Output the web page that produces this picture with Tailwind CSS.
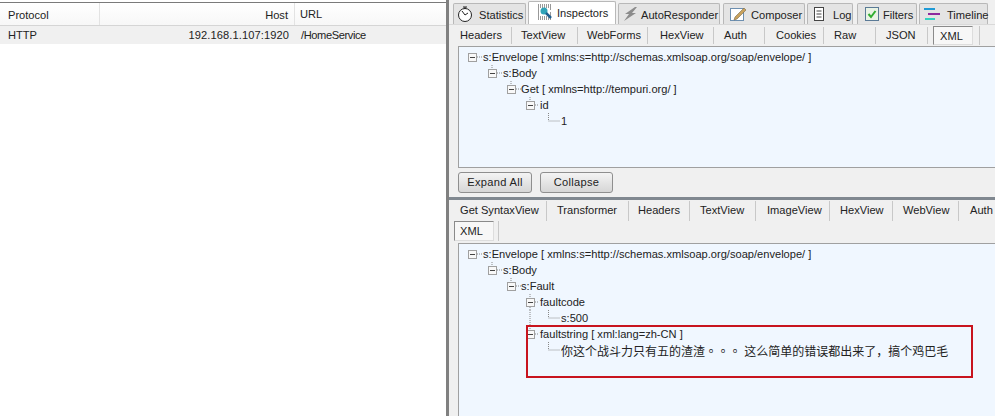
<!DOCTYPE html>
<html lang="zh-CN">
<head>
  <meta charset="UTF-8" />
  <title>Fiddler</title>
  <script src="https://cdn.jsdelivr.net/npm/@tailwindcss/browser@4"></script>
</head>
<body class="bg-[#f0f0f0] text-[#222] h-[416px] w-[995px] overflow-hidden font-['Liberation_Sans','Noto_Sans_CJK_SC',sans-serif] text-[11.1px]">
  <svg width="0" height="0" class="block h-0">
    <symbol id="exp" viewBox="0 0 9 9"><rect x="0.5" y="0.5" width="8" height="8" fill="#f8f8f8" stroke="#a0a0a0"/><path d="M2 4.5h5" stroke="#444"/></symbol>
  </svg>
  <div class="flex h-full">
    <!-- session list -->
    <div class="w-[446px] shrink-0 pt-[2px] bg-white flex flex-col">
      <div class="h-[1px] bg-[#7a7a7a]"></div>
      <div class="flex h-[23px] items-center border-b border-[#d5d5d5] bg-gradient-to-b from-white to-[#f7f7f7]">
        <div class="w-[100px] pl-[8px] border-r border-[#e3e3e3] h-full leading-[24px]">Protocol</div>
        <div class="w-[195px] pr-[6px] text-right border-r border-[#e3e3e3] h-full leading-[24px]">Host</div>
        <div class="pl-[5px] leading-[24px]">URL</div>
      </div>
      <div class="flex h-[18px] bg-[#f0f0f0] leading-[19px]">
        <div class="w-[100px] pl-[8px]">HTTP</div>
        <div class="w-[189px] text-right tracking-[0.1px]">192.168.1.107:1920</div>
        <div class="pl-[12px] tracking-[-0.4px]">/HomeService</div>
      </div>
    </div>
    <div class="w-[3px] shrink-0 bg-[#808080]"></div>

    <!-- inspectors -->
    <div class="flex-1 min-w-0 flex flex-col">
      <!-- top tabs -->
      <div class="flex items-end h-[24px] pl-[4px] pt-[2px] leading-[20px] [&>div>span]:translate-y-[1px]">
        <div class="w-[73px] h-[21px] mr-[2px] flex items-center gap-[6px] pl-[3px] bg-[#e4e4e4] border border-b-0 border-[#b8b8b8] rounded-t-[2px]">
          <svg width="16" height="18" viewBox="0 0 16 18" fill="none" stroke="#222" class="shrink-0"><circle cx="8" cy="10" r="6.5" fill="#fff"/><path d="M8 10L5 6M8 10l3-2M6 2h4M8 2v2"/></svg>
          <span>Statistics</span>
        </div>
        <div class="w-[88px] h-[23px] mr-[2px] flex items-center gap-[4px] pl-[8px] pb-[2px] bg-white border border-b-0 border-[#b8b8b8] rounded-t-[2px]">
          <svg width="16" height="16" viewBox="0 0 16 16" class="shrink-0"><path d="M1 1h14v14H1z" fill="#fff"/><path d="M1 1h14M1 3h14M1 13h14M1 15h14M1 5h2M1 7h2M1 9h2M1 11h2M13 5h2M13 9h2M13 11h2" stroke="#333" stroke-dasharray="1 1"/><circle cx="7" cy="7" r="3.5" fill="#2fa3b8"/><path d="M9 9l5 5" stroke="#1f5f8f" stroke-width="2.5"/></svg>
          <span>Inspectors</span>
        </div>
        <div class="w-[102px] h-[21px] mr-[3px] flex items-center gap-[2px] pl-[4px] bg-[#e4e4e4] border border-b-0 border-[#b8b8b8] rounded-t-[2px]">
          <svg width="16" height="16" viewBox="0 0 16 16" class="shrink-0"><path d="M12 1L2 8h4l-5 7 12-8H9l5-6z" fill="#8c8c8c"/></svg>
          <span>AutoResponder</span>
        </div>
        <div class="w-[82px] h-[21px] mr-[2px] flex items-center gap-[4px] pl-[5px] bg-[#e4e4e4] border border-b-0 border-[#b8b8b8] rounded-t-[2px]">
          <svg width="18" height="16" viewBox="0 0 18 16" class="shrink-0"><rect x="1.5" y="2.5" width="13" height="12" fill="#fff" stroke="#6d8fb0"/><path d="M6 11l9-9 2 2-9 9-3 1z" fill="#c9a25c" stroke="#7a6a4a" stroke-width="0.6"/></svg>
          <span>Composer</span>
        </div>
        <div class="w-[46px] h-[21px] mr-[4px] flex items-center gap-[8px] pl-[5px] bg-[#e4e4e4] border border-b-0 border-[#b8b8b8] rounded-t-[2px]">
          <svg width="12" height="16" viewBox="0 0 12 16" fill="#fff" stroke="#444" class="shrink-0"><rect x="1.5" y="1.5" width="9" height="13"/><path d="M3.5 5h5M3.5 8h5M3.5 11h5"/></svg>
          <span>Log</span>
        </div>
        <div class="w-[60px] h-[21px] mr-[2px] flex items-center gap-[4px] pl-[7px] bg-[#e4e4e4] border border-b-0 border-[#b8b8b8] rounded-t-[2px]">
          <svg width="14" height="14" viewBox="0 0 14 14" class="shrink-0"><rect x="0.5" y="0.5" width="13" height="13" fill="#e9f3e4" stroke="#5a7a96"/><path d="M3.5 7l2.5 3 4.5-6" fill="none" stroke="#2fae2f" stroke-width="2"/></svg>
          <span>Filters</span>
        </div>
        <div class="w-[69px] h-[21px] flex items-center gap-[6px] pl-[4px] bg-[#e4e4e4] border border-b-0 border-[#b8b8b8] rounded-t-[2px]">
          <svg width="17" height="14" viewBox="0 0 17 14" fill="none" stroke-width="2" class="shrink-0"><path d="M0 2h11" stroke="#1e9ad6"/><path d="M4 7h12" stroke="#8e2a9e"/><path d="M1 12h10" stroke="#35d0c0"/></svg>
          <span>Timeline</span>
        </div>
      </div>

      <!-- request sub tabs -->
      <div class="flex h-[22px] border-t border-[#d9d9d9] items-center">
        <div class="w-[63px] h-[17px] pl-[11px] border-r border-[#c8c8c8] leading-[17px]">Headers</div>
        <div class="w-[66px] h-[17px] pl-[9px] border-r border-[#c8c8c8] leading-[17px]">TextView</div>
        <div class="w-[70px] h-[17px] pl-[9px] border-r border-[#c8c8c8] leading-[17px]">WebForms</div>
        <div class="w-[66px] h-[17px] pl-[12px] border-r border-[#c8c8c8] leading-[17px]">HexView</div>
        <div class="w-[51px] h-[17px] pl-[10px] border-r border-[#c8c8c8] leading-[17px]">Auth</div>
        <div class="w-[59px] h-[17px] pl-[11px] border-r border-[#c8c8c8] leading-[17px]">Cookies</div>
        <div class="w-[52px] h-[17px] pl-[10px] border-r border-[#c8c8c8] leading-[17px]">Raw</div>
        <div class="w-[52px] h-[17px] pl-[10px] border-r border-[#c8c8c8] leading-[17px]">JSON</div>
        <div class="w-[52px] h-[19px] pl-[5px] border-r border-[#c8c8c8]">
          <div class="w-[40px] h-[19px] pl-[6px] leading-[18px] bg-[#f7f7f7] border border-[#8a8a8a] border-b-[#ddd] border-r-[#ddd]">XML</div>
        </div>
      </div>

      <!-- request tree -->
      <div class="ml-[9px] h-[122px] bg-[#f0f7ff] border border-[#a0a0a0] border-r-0 pt-[2px] leading-none [&>div>span]:translate-y-[1px]">
        <div class="flex items-center h-[16px]">
          <svg width="24" height="16" class="shrink-0"><use href="#exp" x="9" y="4" width="9" height="9"/><path d="M18 8h5" stroke="#888" stroke-dasharray="1 1"/></svg><span>s:Envelope [ xmlns:s=http://schemas.xmlsoap.org/soap/envelope/ ]</span>
        </div>
        <div class="flex items-center h-[16px]">
          <svg width="44" height="16" class="shrink-0"><path d="M33 0v4" stroke="#888" stroke-dasharray="1 1"/><use href="#exp" x="29" y="4" width="9" height="9"/><path d="M38 8h5" stroke="#888" stroke-dasharray="1 1"/></svg><span>s:Body</span>
        </div>
        <div class="flex items-center h-[16px]">
          <svg width="62" height="16" class="shrink-0"><path d="M52 0v4" stroke="#888" stroke-dasharray="1 1"/><use href="#exp" x="48" y="4" width="9" height="9"/><path d="M57 8h5" stroke="#888" stroke-dasharray="1 1"/></svg><span>Get [ xmlns=http://tempuri.org/ ]</span>
        </div>
        <div class="flex items-center h-[16px]">
          <svg width="81" height="16" class="shrink-0"><path d="M71 0v4" stroke="#888" stroke-dasharray="1 1"/><use href="#exp" x="67" y="4" width="9" height="9"/><path d="M76 8h4" stroke="#888" stroke-dasharray="1 1"/></svg><span>id</span>
        </div>
        <div class="flex items-center h-[16px]">
          <svg width="102" height="16" class="shrink-0"><path d="M89.5 0v8h11" stroke="#888" fill="none" stroke-dasharray="1 1"/></svg><span>1</span>
        </div>
      </div>

      <!-- buttons -->
      <div class="flex gap-[8px] ml-[9px] mt-[4px] h-[21px]">
        <button class="w-[74px] rounded-[3px] border border-[#8f8f8f] bg-gradient-to-b from-[#f4f4f4] to-[#d6d6d6] tracking-[0.3px]">Expand All</button>
        <button class="w-[73px] rounded-[3px] border border-[#8f8f8f] bg-gradient-to-b from-[#f4f4f4] to-[#d6d6d6] tracking-[0.3px]">Collapse</button>
      </div>

      <div class="h-[3px] mt-[4px] bg-[#808890]"></div>

      <!-- response sub tabs -->
      <div class="flex h-[21px] items-center">
        <div class="w-[98px] h-[20px] pl-[11px] border-r border-[#c8c8c8] leading-[18px] whitespace-nowrap">Get SyntaxView</div>
        <div class="w-[82px] h-[20px] pl-[10px] border-r border-[#c8c8c8] leading-[18px]">Transformer</div>
        <div class="w-[61px] h-[20px] pl-[9px] border-r border-[#c8c8c8] leading-[18px]">Headers</div>
        <div class="w-[66px] h-[20px] pl-[10px] border-r border-[#c8c8c8] leading-[18px]">TextView</div>
        <div class="w-[74px] h-[20px] pl-[11px] border-r border-[#c8c8c8] leading-[18px]">ImageView</div>
        <div class="w-[63px] h-[20px] pl-[10px] border-r border-[#c8c8c8] leading-[18px]">HexView</div>
        <div class="w-[66px] h-[20px] pl-[10px] border-r border-[#c8c8c8] leading-[18px]">WebView</div>
        <div class="pl-[11px] h-[20px] leading-[18px]">Auth</div>
      </div>
      <div class="flex h-[22px]">
        <div class="w-[50px] h-[20px] pl-[5px] border-r border-[#c8c8c8]">
          <div class="w-[40px] h-[20px] pl-[5px] leading-[19px] bg-[#f7f7f7] border border-[#8a8a8a] border-b-[#ddd] border-r-[#ddd]">XML</div>
        </div>
      </div>

      <!-- response tree -->
      <div class="ml-[9px] flex-1 bg-[#f0f7ff] border-t border-l border-[#a0a0a0] pt-[2px] leading-none [&>div>span]:translate-y-[1px]">
        <div class="flex items-center h-[16px]">
          <svg width="24" height="16" class="shrink-0"><use href="#exp" x="9" y="4" width="9" height="9"/><path d="M18 8h5" stroke="#888" stroke-dasharray="1 1"/></svg><span>s:Envelope [ xmlns:s=http://schemas.xmlsoap.org/soap/envelope/ ]</span>
        </div>
        <div class="flex items-center h-[16px]">
          <svg width="44" height="16" class="shrink-0"><path d="M33 0v4" stroke="#888" stroke-dasharray="1 1"/><use href="#exp" x="29" y="4" width="9" height="9"/><path d="M38 8h5" stroke="#888" stroke-dasharray="1 1"/></svg><span>s:Body</span>
        </div>
        <div class="flex items-center h-[16px]">
          <svg width="62" height="16" class="shrink-0"><path d="M52 0v4" stroke="#888" stroke-dasharray="1 1"/><use href="#exp" x="48" y="4" width="9" height="9"/><path d="M57 8h5" stroke="#888" stroke-dasharray="1 1"/></svg><span>s:Fault</span>
        </div>
        <div class="flex items-center h-[16px]">
          <svg width="81" height="16" class="shrink-0"><path d="M71 0v4M71 13v3" stroke="#888" stroke-dasharray="1 1"/><use href="#exp" x="67" y="4" width="9" height="9"/><path d="M76 8h4" stroke="#888" stroke-dasharray="1 1"/></svg><span>faultcode</span>
        </div>
        <div class="flex items-center h-[16px]">
          <svg width="102" height="16" class="shrink-0"><path d="M71 0v16" stroke="#888" stroke-dasharray="1 1"/><path d="M89.5 0v8h11" stroke="#888" fill="none" stroke-dasharray="1 1"/></svg><span>s:500</span>
        </div>
        <div class="flex items-center h-[16px]">
          <svg width="81" height="16" class="shrink-0"><path d="M71 0v4" stroke="#888" stroke-dasharray="1 1"/><use href="#exp" x="67" y="4" width="9" height="9"/><path d="M76 8h4" stroke="#888" stroke-dasharray="1 1"/></svg><span>faultstring [ xml:lang=zh-CN ]</span>
        </div>
        <div class="flex items-center h-[16px]">
          <svg width="102" height="16" class="shrink-0"><path d="M89.5 0v8h11" stroke="#888" fill="none" stroke-dasharray="1 1"/></svg><span class="whitespace-nowrap text-[12px]">你这个战斗力只有五的渣渣<span lang="zh-TW" class="font-['Noto_Sans_CJK_TC',sans-serif]">。。。</span> 这么简单的错误都出来了&#xFF0C;搞个鸡巴毛</span>
        </div>
      </div>
    </div>
  </div>
  <!-- red annotation drawn over the tree -->
  <div class="absolute left-[526px] top-[325px] w-[447px] h-[53px] border-2 border-[#c8141e]"></div>
</body>
</html>
